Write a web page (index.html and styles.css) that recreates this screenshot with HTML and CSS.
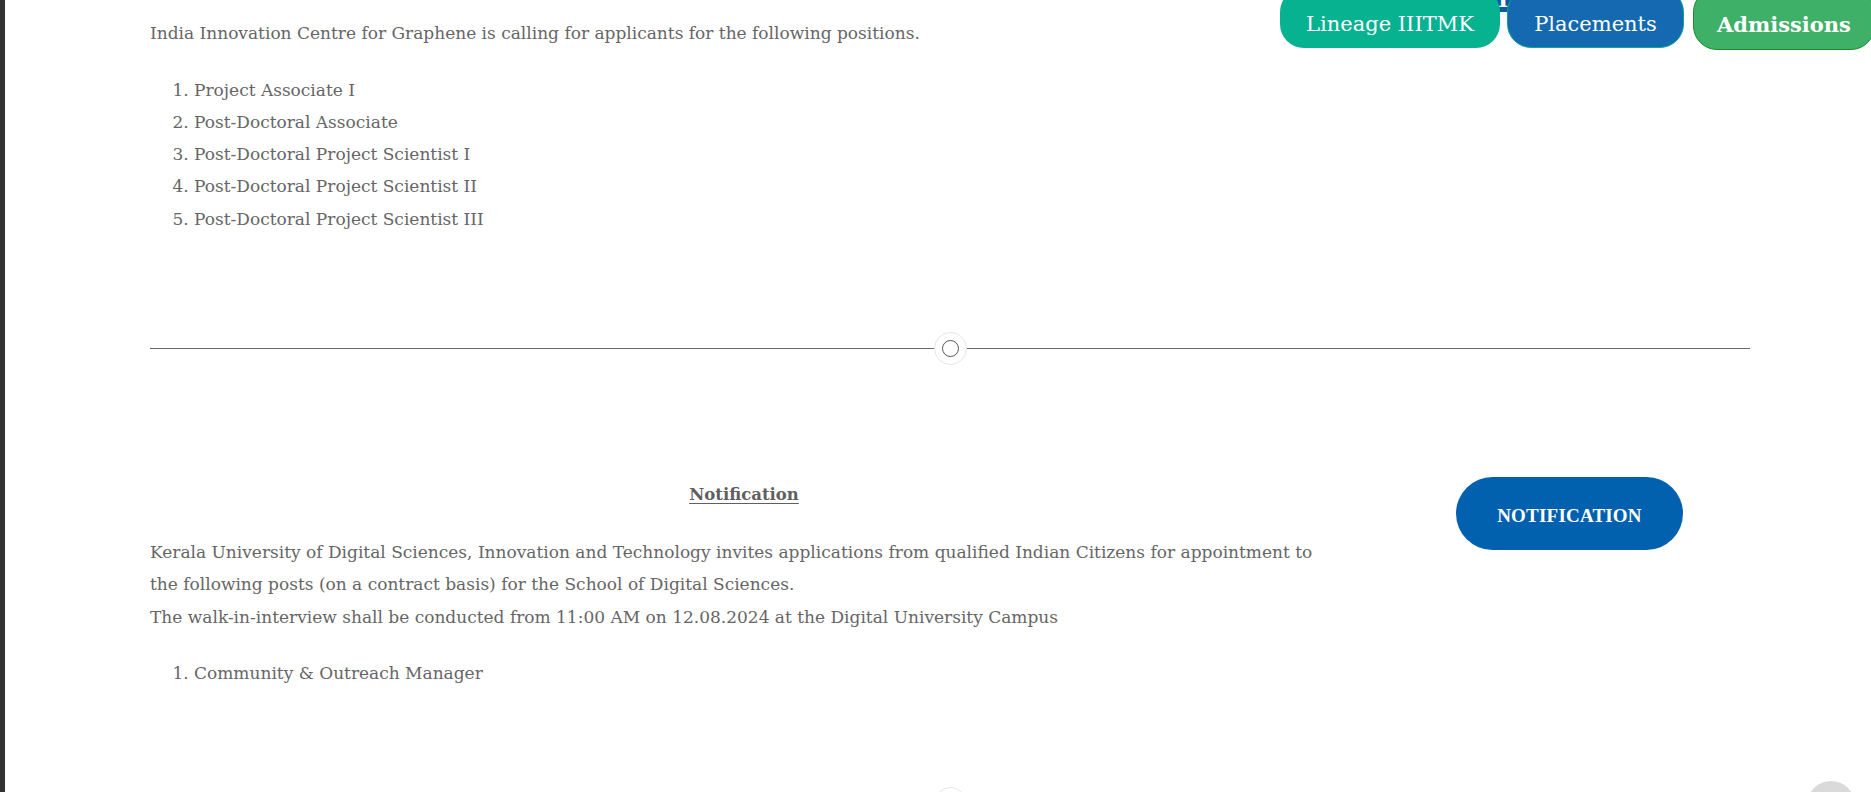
FILE: index.html
```html
<!DOCTYPE html>
<html lang="en">
<head>
<meta charset="utf-8">
<title>Careers</title>
<link rel="stylesheet" href="styles.css">
</head>
<body>
<div class="frame">
  <div class="edge"></div>
  <main class="page">
    <section class="post post-lead">
      <div class="post-body">
        <p class="post-text">India Innovation Centre for Graphene is calling for applicants for the following positions.</p>
        <ol class="post-list">
          <li>Project Associate I</li>
          <li>Post-Doctoral Associate</li>
          <li>Post-Doctoral Project Scientist I</li>
          <li>Post-Doctoral Project Scientist II</li>
          <li>Post-Doctoral Project Scientist III</li>
        </ol>
      </div>
      <div class="post-side"></div>
    </section>

    <div class="divider"><span class="divider-line"></span><span class="divider-dot"><span class="divider-ring"></span></span><span class="divider-line"></span></div>

    <section class="post">
      <div class="post-body">
        <h4 class="post-title">Notification</h4>
        <p class="post-text">Kerala University of Digital Sciences, Innovation and Technology invites applications from qualified Indian Citizens for appointment to<br>the following posts (on a contract basis) for the School of Digital Sciences.<br>The walk-in-interview shall be conducted from 11:00 AM on 12.08.2024 at the Digital University Campus</p>
        <ol class="post-list">
          <li>Community &amp; Outreach Manager</li>
        </ol>
      </div>
      <div class="post-side"><a class="notif-btn" href="#">NOTIFICATION</a></div>
    </section>

    <div class="divider"><span class="divider-line"></span><span class="divider-dot"><span class="divider-ring"></span></span><span class="divider-line"></span></div>
  </main>
</div>

<div class="header-strip"><span class="header-strip-text">IN</span></div>
<nav class="quick-links">
  <a class="quick-btn quick-lineage" href="#">Lineage IIITMK</a>
  <a class="quick-btn quick-placements" href="#">Placements</a>
  <a class="quick-btn quick-admissions" href="#">Admissions</a>
</nav>
<a class="to-top" href="#"></a>
</body>
</html>
```

FILE: styles.css
```css
* { box-sizing: border-box; }

html, body {
  margin: 0;
  padding: 0;
  background: #ffffff;
}

body {
  font-family: "DejaVu Serif", "Liberation Serif", serif;
  font-size: 17px;
  color: #666666;
  overflow: hidden;
  height: 792px;
}

.frame {
  display: flex;
  min-height: 792px;
}

.edge {
  flex: 0 0 5px;
  background: #333333;
}

.page {
  flex: 1;
  padding: 0 121px 0 145px;
}

.post {
  display: grid;
  grid-template-columns: 1188px 1fr;
  padding: 113px 0 97px;
}

.post-lead {
  padding-top: 17px;
}

.post-body {
  min-width: 0;
}

.post-text {
  margin: 0 0 24px;
  line-height: 32.5px;
  white-space: nowrap;
}

.post-list {
  margin: 0;
  padding-left: 44px;
  line-height: 32.3px;
}

.post-title {
  margin: 1px 0 25px;
  text-align: center;
  font-size: 16.5px;
  font-weight: bold;
  line-height: 32px;
  text-decoration: underline;
  text-underline-offset: 3px;
  color: #5f5f5f;
}

.post-side {
  padding-left: 118px;
  margin-top: -1px;
}

.notif-btn {
  display: flex;
  align-items: center;
  justify-content: center;
  width: 227px;
  height: 73px;
  padding-top: 6px;
  border-radius: 37px;
  background: #0161ae;
  color: #ffffff;
  font-family: "Liberation Serif", serif;
  font-weight: bold;
  font-size: 19px;
  text-decoration: none;
  letter-spacing: 0.2px;
}

.divider {
  display: flex;
  align-items: center;
  height: 33px;
}

.divider-line {
  flex: 1;
  height: 1px;
  background: #6a6a6a;
}

.divider-dot {
  flex: 0 0 33px;
  height: 33px;
  border: 1px solid #e6e6e6;
  border-radius: 50%;
  display: flex;
  align-items: center;
  justify-content: center;
  background: #ffffff;
}

.divider-ring {
  width: 17px;
  height: 17px;
  border: 1.5px solid #555555;
  border-radius: 50%;
}

.header-strip {
  position: fixed;
  top: 0;
  left: 1440px;
  width: 140px;
  height: 12px;
  background: #0c5ba6;
  overflow: hidden;
}

.header-strip-text {
  display: block;
  color: #ffffff;
  font-weight: bold;
  font-size: 22px;
  line-height: 22px;
  margin-top: -12px;
  margin-left: 58px;
}

.quick-links {
  position: fixed;
  top: -12px;
  left: 1280px;
  display: flex;
  align-items: flex-start;
}

.quick-btn {
  display: flex;
  align-items: center;
  justify-content: center;
  height: 60px;
  padding-top: 12px;
  border-radius: 24px;
  color: #ffffff;
  text-decoration: none;
  font-size: 21px;
}

.quick-lineage {
  width: 220px;
  background: #06b290;
  position: relative;
  z-index: 2;
}

.quick-placements {
  width: 177px;
  margin-left: 7px;
  background: #1569b0;
  border: 1px solid #10a39a;
}

.quick-admissions {
  width: 182px;
  height: 62px;
  margin-left: 9px;
  padding-top: 10px;
  background: #3fb068;
  border: 1px solid #1c8a2b;
  font-weight: bold;
  font-size: 21px;
}

.to-top {
  position: fixed;
  right: 16px;
  bottom: -37px;
  width: 48px;
  height: 48px;
  border-radius: 50%;
  background: #dadada;
}
```
